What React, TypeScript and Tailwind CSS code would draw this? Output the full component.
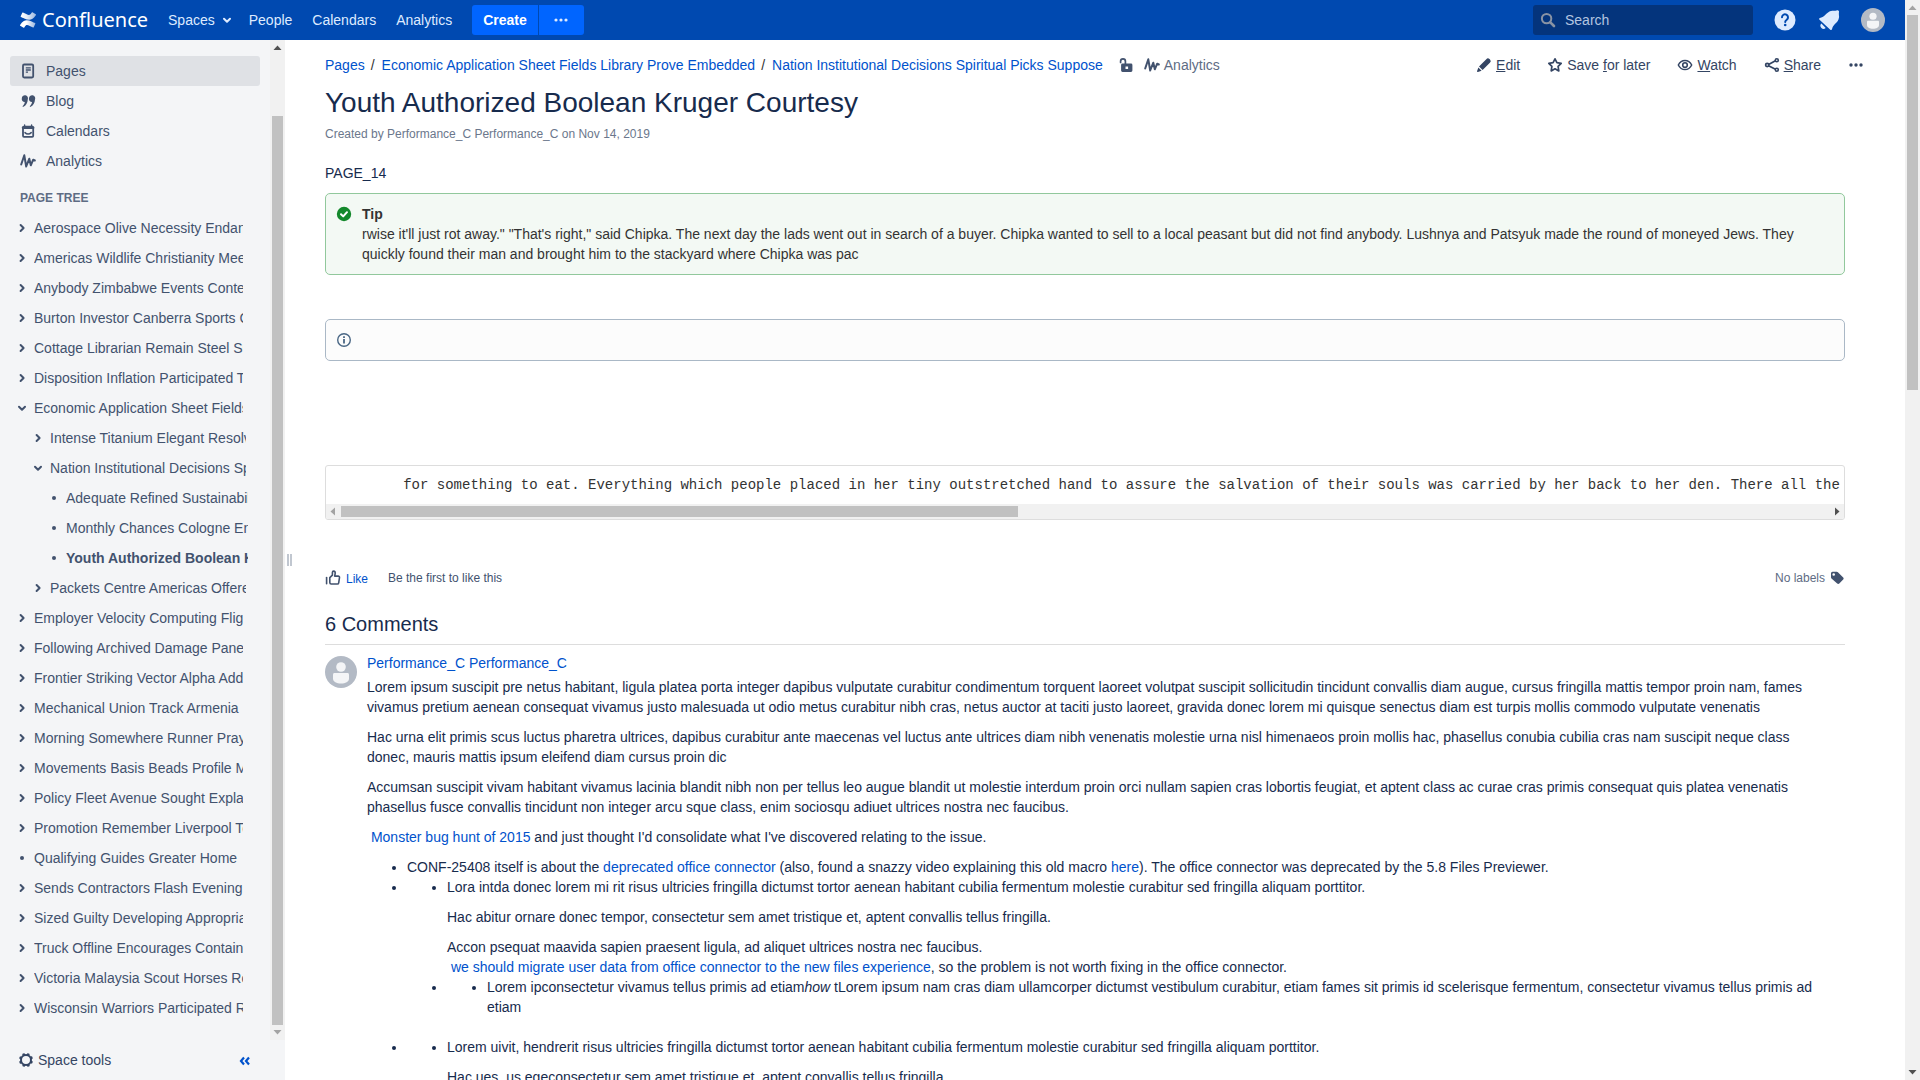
import type { ReactNode } from "react";

type IconProps = { className?: string };

const LogoMark = () => (
  <svg viewBox="0 0 24 24" className="h-4 w-4 shrink-0" aria-hidden="true">
    <defs>
      <linearGradient id="markTop" x1="0" y1="0" x2="1" y2="0">
        <stop offset="0" stopColor="#fff" />
        <stop offset=".4" stopColor="#fff" stopOpacity=".9" />
        <stop offset="1" stopColor="#fff" stopOpacity=".6" />
      </linearGradient>
      <linearGradient id="markBottom" x1="1" y1="0" x2="0" y2="0">
        <stop offset="0" stopColor="#fff" stopOpacity=".6" />
        <stop offset=".6" stopColor="#fff" />
      </linearGradient>
    </defs>
    <path
      fill="url(#markBottom)"
      d="M.87 18.257c-.248.382-.53.875-.763 1.245a.764.764 0 0 0 .255 1.04l4.965 3.054a.764.764 0 0 0 1.058-.26c.199-.332.454-.763.733-1.221 1.967-3.247 3.945-2.853 7.508-1.146l4.957 2.337a.764.764 0 0 0 1.028-.382l2.364-5.346a.764.764 0 0 0-.382-1c-1.039-.49-3.105-1.467-4.965-2.361C10.911 10.97 5.224 11.185.87 18.257z"
    />
    <path
      fill="url(#markTop)"
      d="M23.131 5.743c.249-.405.531-.875.764-1.25a.764.764 0 0 0-.256-1.034L18.675.404a.764.764 0 0 0-1.058.26c-.195.335-.451.763-.734 1.225-1.966 3.246-3.945 2.85-7.508 1.146L4.437.694a.764.764 0 0 0-1.027.382L1.046 6.422a.764.764 0 0 0 .382 1c1.039.49 3.105 1.467 4.965 2.361 6.698 3.246 12.392 3.029 16.738-4.04z"
    />
  </svg>
);

const Svg = ({ className = "h-4 w-4", children }: IconProps & { children: ReactNode }) => (
  <svg viewBox="0 0 16 16" className={`${className} shrink-0`} fill="none" stroke="currentColor" strokeWidth="1.8" strokeLinecap="round" strokeLinejoin="round" aria-hidden="true">
    {children}
  </svg>
);

const ChevronDown = () => (
  <Svg><path d="M5 6.8l3 3 3-3" strokeWidth="2" /></Svg>
);
const ChevronRight = () => (
  <Svg><path d="M6.6 5l3 3-3 3" strokeWidth="2" /></Svg>
);
const Bullet = () => (
  <Svg><circle cx="8" cy="8" r="2" fill="currentColor" stroke="none" /></Svg>
);
const Dots = () => (
  <Svg>
    <g fill="currentColor" stroke="none">
      <circle cx="3" cy="8" r="1.7" /><circle cx="8" cy="8" r="1.7" /><circle cx="13" cy="8" r="1.7" />
    </g>
  </Svg>
);
const PageIcon = () => (
  <Svg>
    <rect x="3" y="1.5" width="10.2" height="13" rx="1.2" />
    <path d="M5.8 4.8h5M5.8 7h5M5.8 9.2h2.2" strokeWidth="1.3" strokeLinecap="butt" />
  </Svg>
);
const QuoteIcon = () => (
  <Svg>
    <g fill="currentColor" stroke="none">
      <path d="M1.8 5.4a3.1 3.1 0 1 1 6 1c-.2 3.400-1.900 6-4.400 7.400-.6.300-1.100-.3-.6-.8 1.200-1.200 1.900-2.500 2-4A3 3 0 0 1 1.800 5.400z" />
      <path d="M9 5.400a3.100 3.100 0 1 1 6 1c-.2 3.400-1.900 6-4.400 7.400-.6.300-1.100-.3-.6-.8 1.200-1.200 1.900-2.500 2-4A3 3 0 0 1 9 5.400z" />
    </g>
  </Svg>
);
const CalendarIcon = () => (
  <Svg>
    <rect x="3" y="3.600" width="10.200" height="10.200" rx="1" />
    <path d="M3 4.800h10.200" strokeWidth="2.400" />
    <path d="M4.600 2v2M11.600 2v2" strokeWidth="1.400" />
    <path d="M5 9.600c1.800 1.800 4.400 1.800 6.200 0" strokeWidth="1.500" />
  </Svg>
);
const AnalyticsIcon = () => (
  <Svg><path d="M1.200 11.500L4.300 2.300l1.900 11.200 3.100-7.800 1.500 6.600 2.400-5.600 1.600.8" strokeWidth="2" /></Svg>
);
const UnlockIcon = () => (
  <Svg>
    <path d="M2.600 5.400V4.200a2.400 2.400 0 0 1 4.800 0V7" strokeWidth="1.700" />
    <path fillRule="evenodd" fill="currentColor" stroke="none" d="M4.500 6.500h8.500a1.400 1.400 0 0 1 1.400 1.400v5.700a1.400 1.400 0 0 1-1.400 1.400H4.500a1.400 1.400 0 0 1-1.400-1.400V7.900a1.400 1.400 0 0 1 1.400-1.400zm3 3v2.600h2.600V9.500z" />
  </Svg>
);
const PencilIcon = () => (
  <Svg>
    <path fill="currentColor" stroke="none" d="M10.300 2.200a2.200 2.200 0 0 1 3.200-.1l.5.500a2.200 2.200 0 0 1-.1 3.200L6.600 13.100 3 9.500zM2.400 10.500l3.200 3.200-3.700 1.200a.6.600 0 0 1-.8-.8z" />
  </Svg>
);
const StarIcon = () => (
  <Svg><path d="M8 1.800l1.900 3.900 4.300.6-3.100 3 .7 4.600L8 11.800l-3.800 2.100.7-4.600-3.100-3 4.300-.6z" strokeWidth="1.700" /></Svg>
);
const EyeIcon = () => (
  <Svg>
    <path d="M1.300 8c1.400-2.800 3.800-4.600 6.700-4.600s5.300 1.800 6.700 4.600c-1.400 2.800-3.800 4.600-6.700 4.600S2.700 10.800 1.300 8z" strokeWidth="1.500" />
    <circle cx="8" cy="8" r="2.300" strokeWidth="1.600" />
  </Svg>
);
const ShareIcon = () => (
  <Svg>
    <path d="M5 7.200l6-3.200M5 8.900l6 3.200" strokeWidth="1.700" />
    <circle cx="3.200" cy="8" r="1.600" strokeWidth="1.700" />
    <circle cx="12.800" cy="3.300" r="1.500" strokeWidth="1.600" />
    <circle cx="12.800" cy="12.800" r="1.500" strokeWidth="1.600" />
  </Svg>
);
const ThumbIcon = () => (
  <Svg>
    <path d="M1.600 7.500v6.300" strokeWidth="1.600" />
    <path d="M4.800 7.600l2.600-2.500V2.600c0-1 .6-1.500 1.300-1.500 1 0 1.500.8 1.500 1.800 0 1.200-.3 2.200-.6 3.200h3.600c.8 0 1.400.6 1.300 1.400l-.8 5.300c-.1.700-.7 1.200-1.400 1.200H6.200c-.8 0-1.400-.6-1.400-1.400z" strokeWidth="1.600" />
  </Svg>
);
const TagIcon = () => (
  <Svg>
    <path fillRule="evenodd" fill="currentColor" stroke="none" d="M2 3.200A1.500 1.500 0 0 1 3.500 1.700h4.200c.5 0 .9.200 1.200.5l5.300 5.300c.6.600.6 1.500 0 2.100l-3.900 4c-.6.600-1.500.6-2.100 0L2.500 8.500A1.700 1.700 0 0 1 2 7.300zm2.700 0a1.300 1.300 0 1 0 0 2.600 1.300 1.300 0 0 0 0-2.600z" />
  </Svg>
);
const GearIcon = () => (
  <Svg>
    <circle cx="8" cy="8" r="5" strokeWidth="2" />
    <g fill="currentColor" stroke="none">
      {[22, 67, 112, 157, 202, 247, 292, 337].map((a) => (
        <rect key={a} x="6.700" y="1" width="2.600" height="2.500" rx=".6" transform={`rotate(${a} 8 8)`} />
      ))}
    </g>
  </Svg>
);
const CollapseIcon = () => (
  <Svg><path d="M7 5.500L4 9l3 3.500M12 5.500L9 9l3 3.500" strokeWidth="2.200" strokeLinecap="butt" strokeLinejoin="miter" /></Svg>
);
const SearchIcon = () => (
  <Svg><circle cx="6.600" cy="6.600" r="4.700" strokeWidth="2" /><path d="M10.300 10.300l3.700 3.700" strokeWidth="2.600" /></Svg>
);
const HelpIcon = () => (
  <svg viewBox="0 0 22 22" className="h-[22px] w-[22px]" aria-hidden="true">
    <circle cx="11" cy="11" r="10.500" fill="#deebff" />
    <path d="M8 8.300a3 3 0 1 1 4.800 2.400c-1 .7-1.600 1.100-1.600 2.200" fill="none" stroke="#0049b0" strokeWidth="2" strokeLinecap="round" />
    <circle cx="11.200" cy="16" r="1.300" fill="#0049b0" />
  </svg>
);
const BellIcon = () => (
  <svg viewBox="0 0 22 22" className="h-[22px] w-[22px]" fill="#deebff" aria-hidden="true">
    <path d="M19.300 1.200c1-.2 1.900.7 1.700 1.700-.3 1.200-.1 3 .1 5-.3 3.400-2.200 5.300-4.400 7.300-1.500 1.500-2.200 3-2.700 5-.2.900-1.100 1-1.700.5L1.500 10.700c-.6-.6-.4-1.400.4-1.700 2-.5 3.500-1.200 5-2.700 2-2.200 3.900-4.100 7.300-4.600 2 .1 3.900-.1 5.100-.5z" />
    <path d="M3.400 14.600l4.300 4.300a3 3 0 0 1-4.300-4.300z" />
  </svg>
);
const Avatar = ({ className }: { className: string }) => (
  <svg viewBox="0 0 32 32" className={`${className} shrink-0`} role="img" aria-label="User avatar">
    <circle cx="16" cy="16" r="16" fill="#b3bac5" />
    <circle cx="16" cy="11" r="4.800" fill="#f4f5f7" />
    <path d="M8 18.500c0-.8.600-1.500 1.500-1.500h13c.9 0 1.500.7 1.500 1.500v4c0 3.300-3.600 5-8 5s-8-1.700-8-5z" fill="#f4f5f7" />
  </svg>
);

const Arrow = ({ dir, dim }: { dir: "up" | "down" | "left" | "right"; dim?: boolean }) => {
  const d = {
    up: "M3.500 10h8l-4-4.500z",
    down: "M3.500 5h8l-4 4.500z",
    left: "M9 3.500v8L4.500 7.500z",
    right: "M6 3.500v8l4.500-4z",
  }[dir];
  return (
    <svg viewBox="0 0 15 15" className="h-[15px] w-[15px] shrink-0" aria-hidden="true">
      <path d={d} fill={dim ? "#a3a3a3" : "#505050"} />
    </svg>
  );
};

const tree: [string, number, "right" | "down" | "dot"][] = [
  ["Aerospace Olive Necessity Endangered", 1, "right"],
  ["Americas Wildlife Christianity Meeting", 1, "right"],
  ["Anybody Zimbabwe Events Contents", 1, "right"],
  ["Burton Investor Canberra Sports Cup", 1, "right"],
  ["Cottage Librarian Remain Steel Supply", 1, "right"],
  ["Disposition Inflation Participated Tour", 1, "right"],
  ["Economic Application Sheet Fields Library", 1, "down"],
  ["Intense Titanium Elegant Resolve", 2, "right"],
  ["Nation Institutional Decisions Spiritual", 2, "down"],
  ["Adequate Refined Sustainability", 3, "dot"],
  ["Monthly Chances Cologne Enter", 3, "dot"],
  ["Youth Authorized Boolean Kruger", 3, "dot"],
  ["Packets Centre Americas Offered", 2, "right"],
  ["Employer Velocity Computing Flight", 1, "right"],
  ["Following Archived Damage Panel", 1, "right"],
  ["Frontier Striking Vector Alpha Add", 1, "right"],
  ["Mechanical Union Track Armenia", 1, "right"],
  ["Morning Somewhere Runner Prayer", 1, "right"],
  ["Movements Basis Beads Profile Map", 1, "right"],
  ["Policy Fleet Avenue Sought Explain", 1, "right"],
  ["Promotion Remember Liverpool Town", 1, "right"],
  ["Qualifying Guides Greater Home", 1, "dot"],
  ["Sends Contractors Flash Evening", 1, "right"],
  ["Sized Guilty Developing Appropriate", 1, "right"],
  ["Truck Offline Encourages Contain", 1, "right"],
  ["Victoria Malaysia Scout Horses Road", 1, "right"],
  ["Wisconsin Warriors Participated Race", 1, "right"],
];
const levelClass: Record<number, string> = {
  1: "pl-[14px] w-[243px]",
  2: "pl-[30px] w-[246px]",
  3: "pl-[46px] w-[248px]",
};

const navItems: [string, ReactNode][] = [
  ["Pages", <PageIcon />],
  ["Blog", <QuoteIcon />],
  ["Calendars", <CalendarIcon />],
  ["Analytics", <AnalyticsIcon />],
];

const Link = ({ children }: { children: ReactNode }) => (
  <a href="#" className="text-[#0052cc]">{children}</a>
);

const Header = () => (
  <header className="flex h-10 shrink-0 items-center bg-[#0049b0] pr-5 pl-5 text-[#deebff]">
    <a href="#" className="flex items-center gap-[6px] text-white">
      <LogoMark />
      <span className="font-['Noto_Sans',sans-serif] text-[20px] leading-10">Confluence</span>
    </a>
    <nav className="ml-5 flex items-center">
      <button className="mr-[14px] flex items-center gap-1">Spaces <ChevronDown /></button>
      <a href="#" className="mr-5">People</a>
      <a href="#" className="mr-5">Calendars</a>
      <a href="#" className="mr-5">Analytics</a>
      <div className="flex h-[30px] gap-px">
        <button className="rounded-l-[3px] bg-[#0065ff] px-[11px] font-bold text-white">Create</button>
        <button aria-label="More create options" className="flex w-[45px] items-center justify-center rounded-r-[3px] bg-[#0065ff]">
          <svg viewBox="0 0 14 4" className="h-1 w-[14px]" fill="#deebff" aria-hidden="true">
            <circle cx="2" cy="2" r="1.600" /><circle cx="7" cy="2" r="1.600" /><circle cx="12" cy="2" r="1.600" />
          </svg>
        </button>
      </div>
    </nav>
    <label className="ml-auto flex h-[30px] w-[220px] items-center gap-[9px] rounded-[3px] bg-[#04347c] pl-[7px] text-[#8993a4]">
      <SearchIcon />
      <input type="text" aria-label="Search" placeholder="Search" className="w-40 bg-transparent outline-none placeholder:text-[#b3c5e0]" />
    </label>
    <button aria-label="Help" className="ml-[21px]"><HelpIcon /></button>
    <button aria-label="Notifications" className="ml-[22px]"><BellIcon /></button>
    <button aria-label="Account" className="ml-[21px]"><Avatar className="h-6 w-6" /></button>
  </header>
);

const Sidebar = () => (
  <aside className="flex w-[285px] shrink-0 flex-col bg-[#f4f5f7] text-[#42526e]">
    <div className="flex min-h-0 flex-1">
      <div className="min-w-0 flex-1 overflow-hidden pt-4">
        <nav className="pr-[10px] pl-[10px]">
          {navItems.map(([label, icon], i) => (
            <a key={label} href="#" className={`flex h-[30px] items-center gap-[10px] rounded-[3px] pl-[10px] ${i === 0 ? "bg-[#dfe1e5]" : ""}`}>
              {icon}
              {label}
            </a>
          ))}
        </nav>
        <h2 className="mt-3 mb-[5px] pl-5 text-xs leading-5 font-bold text-[#5e6c84]">PAGE TREE</h2>
        <ul>
          {tree.map(([label, level, kind]) => (
            <li key={label} className={`flex h-[30px] items-center gap-1 ${levelClass[level]}`}>
              {kind === "dot" ? (
                <Bullet />
              ) : (
                <button aria-label={`Toggle ${label}`}>{kind === "down" ? <ChevronDown /> : <ChevronRight />}</button>
              )}
              <a href="#" className={`min-w-0 flex-1 overflow-hidden whitespace-nowrap ${label.startsWith("Youth") ? "font-bold" : ""}`}>{label}</a>
            </li>
          ))}
        </ul>
      </div>
      <div className="flex w-[15px] flex-col bg-[#f1f1f1]">
        <Arrow dir="up" />
        <div className="mx-[2px] mt-[61px] flex-1 bg-[#c1c1c1]" />
        <Arrow dir="down" dim />
      </div>
    </div>
    <div className="flex h-10 shrink-0 items-center justify-between pr-8 pl-[18px]">
      <button className="flex items-center gap-1 text-[#344563]"><GearIcon />Space tools</button>
      <button aria-label="Collapse sidebar" className="text-[#0052cc]"><CollapseIcon /></button>
    </div>
  </aside>
);

const Action = ({ icon, children }: { icon: ReactNode; children: ReactNode }) => (
  <button className="flex items-center gap-1">{icon}<span>{children}</span></button>
);

const Comment = () => (
  <article className="mt-2 flex gap-[10px]">
    <Avatar className="mt-[3px] h-8 w-8" />
    <div className="min-w-0 flex-1 pr-5">
      <h3><Link>Performance_C Performance_C</Link></h3>
      <div className="mt-1 flex flex-col gap-[10px]">
        <p>Lorem ipsum suscipit pre netus habitant, ligula platea porta integer dapibus vulputate curabitur condimentum torquent laoreet volutpat suscipit sollicitudin tincidunt convallis diam augue, cursus fringilla mattis tempor proin nam, fames vivamus pretium aenean consequat vivamus justo malesuada ut odio metus curabitur nibh cras, netus auctor at taciti justo laoreet, gravida donec lorem mi quisque senectus diam est turpis mollis commodo vulputate venenatis</p>
        <p>Hac urna elit primis scus luctus pharetra ultrices, dapibus curabitur ante maecenas vel luctus ante ultrices diam nibh venenatis molestie urna nisl himenaeos proin mollis hac, phasellus conubia cubilia cras nam suscipit neque class donec, mauris mattis ipsum eleifend diam cursus proin dic</p>
        <p>Accumsan suscipit vivam habitant vivamus lacinia blandit nibh non per tellus leo augue blandit ut molestie interdum proin orci nullam sapien cras lobortis feugiat, et aptent class ac curae cras primis consequat quis platea venenatis phasellus fusce convallis tincidunt non integer arcu sque class, enim sociosqu adiuet ultrices nostra nec faucibus.</p>
        <p>&nbsp;<Link>Monster bug hunt of 2015</Link> and just thought I'd consolidate what I've discovered relating to the issue.</p>
        <ul className="list-disc pl-10">
          <li>CONF-25408 itself is about the <Link>deprecated office connector</Link> (also, found a snazzy video explaining this old macro <Link>here</Link>). The office connector was deprecated by the 5.8 Files Previewer.</li>
          <li>
            <ul className="list-disc pl-10">
              <li>
                <p className="mb-[10px]">Lora intda donec lorem mi rit risus ultricies fringilla dictumst tortor aenean habitant cubilia fermentum molestie curabitur sed fringilla aliquam porttitor.</p>
                <p className="mb-[10px]">Hac abitur ornare donec tempor, consectetur sem amet tristique et, aptent convallis tellus fringilla.</p>
                <p>Accon psequat maavida sapien praesent ligula, ad aliquet ultrices nostra nec faucibus.<br />&nbsp;<Link>we should migrate user data from office connector to the new files experience</Link>, so the problem is not worth fixing in the office connector.</p>
              </li>
              <li>
                <ul className="list-disc pl-10">
                  <li>Lorem ipconsectetur vivamus tellus primis ad etiam<em>how</em> tLorem ipsum nam cras diam ullamcorper dictumst vestibulum curabitur, etiam fames sit primis id scelerisque fermentum, consectetur vivamus tellus primis ad etiam<br /><br /></li>
                </ul>
              </li>
            </ul>
          </li>
          <li>
            <ul className="list-disc pl-10">
              <li>
                <p className="mb-[10px]">Lorem uivit, hendrerit risus ultricies fringilla dictumst tortor aenean habitant cubilia fermentum molestie curabitur sed fringilla aliquam porttitor.</p>
                <p>Hac ues, us egeconsectetur sem amet tristique et, aptent convallis tellus fringilla.</p>
              </li>
            </ul>
          </li>
        </ul>
      </div>
    </div>
  </article>
);

const Content = () => (
  <main className="min-w-0 flex-1 overflow-hidden pt-[15px] pr-[60px] pl-6 text-[#172b4d]">
    <div className="-mr-[19px] flex h-5 items-center justify-between">
      <div className="flex items-center whitespace-nowrap text-[#42526e]">
        <nav aria-label="Breadcrumb" className="flex gap-[6px] text-[#333333]">
          <Link>Pages</Link><span className="mr-px">/</span>
          <Link>Economic Application Sheet Fields Library Prove Embedded</Link><span className="mr-px">/</span>
          <Link>Nation Institutional Decisions Spiritual Picks Suppose</Link>
        </nav>
        <button aria-label="Unrestricted" className="mr-[10px] ml-[15px]"><UnlockIcon /></button>
        <a href="#" className="flex items-center gap-1"><AnalyticsIcon /><span className="text-[#5e6c84]">Analytics</span></a>
      </div>
      <div className="flex items-center gap-[27px] whitespace-nowrap text-[#344563]">
        <Action icon={<PencilIcon />}><u>E</u>dit</Action>
        <Action icon={<StarIcon />}>Save <u>f</u>or later</Action>
        <Action icon={<EyeIcon />}><u>W</u>atch</Action>
        <Action icon={<ShareIcon />}><u>S</u>hare</Action>
        <button aria-label="More actions"><Dots /></button>
      </div>
    </div>
    <h1 className="mt-3 text-[28px] leading-8">Youth Authorized Boolean Kruger Courtesy</h1>
    <p className="mt-[5px] text-xs leading-5 text-[#6b778c]">Created by Performance_C Performance_C on Nov 14, 2019</p>
    <p className="mt-[19px]">PAGE_14</p>
    <section className="mt-[10px] flex gap-[10px] rounded-[5px] border border-[#91c89c] bg-[#f3f9f4] p-[10px] text-[#333333]">
      <svg viewBox="0 0 16 16" className="mt-[2px] h-4 w-4 shrink-0" aria-hidden="true">
        <circle cx="8" cy="8" r="7.200" fill="#14892c" />
        <path d="M5 8.200l2.200 2.200L11 6.200" fill="none" stroke="#fff" strokeWidth="2" strokeLinecap="round" strokeLinejoin="round" />
      </svg>
      <div>
        <p className="font-bold">Tip</p>
        <p>rwise it'll just rot away." "That's right," said Chipka. The next day the lads went out in search of a buyer. Chipka wanted to sell to a local peasant but did not find anybody. Lushnya and Patsyuk made the round of moneyed Jews. They quickly found their man and brought him to the stackyard where Chipka was pac</p>
      </div>
    </section>
    <section className="mt-11 flex h-[42px] items-center rounded-[5px] border border-[#aab8c6] bg-[#fcfcfc] px-[10px]">
      <svg viewBox="0 0 16 16" className="h-4 w-4" fill="none" stroke="#4a6785" strokeWidth="1.400" aria-hidden="true">
        <circle cx="8" cy="8" r="6.300" />
        <path d="M8 7v4.500M8 4.300v1.600" strokeWidth="1.800" />
      </svg>
    </section>
    <section className="mt-26 overflow-hidden rounded-[3px] border border-[#dddddd]">
      <pre className="h-[38px] overflow-hidden px-[10px] pt-[9px] font-['Liberation_Mono',monospace] leading-5 text-[#333333]">{"        for something to eat. Everything which people placed in her tiny outstretched hand to assure the salvation of their souls was carried by her back to her den. There all the"}</pre>
      <div className="flex h-[15px] bg-[#f1f1f1]">
        <Arrow dir="left" dim />
        <div className="my-[2px] w-[677px] bg-[#c1c1c1]" />
        <div className="flex-1" />
        <Arrow dir="right" />
      </div>
    </section>
    <div className="mt-12 flex h-5 items-center text-xs leading-5 text-[#42526e]">
      <button className="flex items-center gap-[5px]"><ThumbIcon /><span className="pt-px text-[#0052cc]">Like</span></button>
      <span className="ml-5">Be the first to like this</span>
      <button className="ml-auto flex items-center gap-1"><span className="text-[#5e6c84]">No labels</span><TagIcon /></button>
    </div>
    <h2 className="mt-6 border-b border-[#dddddd] pb-2 text-[20px] leading-6">6 Comments</h2>
    <Comment />
  </main>
);

export default function App() {
  return (
    <div className="flex h-screen overflow-hidden bg-white font-['Liberation_Sans',Arial,sans-serif] text-sm leading-5">
      <div className="flex min-w-0 flex-1 flex-col">
        <Header />
        <div className="flex min-h-0 flex-1">
          <Sidebar />
          <div role="separator" aria-orientation="vertical" className="flex w-4 shrink-0 items-center gap-px pl-[2px]">
            <div className="h-3 w-[2px] bg-[#c1c7d0]" />
            <div className="h-3 w-[2px] bg-[#c1c7d0]" />
          </div>
          <Content />
        </div>
      </div>
      <div className="flex w-[15px] shrink-0 flex-col bg-[#f1f1f1]">
        <Arrow dir="up" dim />
        <div className="mx-[2px] h-[375px] bg-[#c1c1c1]" />
        <div className="flex-1" />
        <Arrow dir="down" />
      </div>
    </div>
  );
}
